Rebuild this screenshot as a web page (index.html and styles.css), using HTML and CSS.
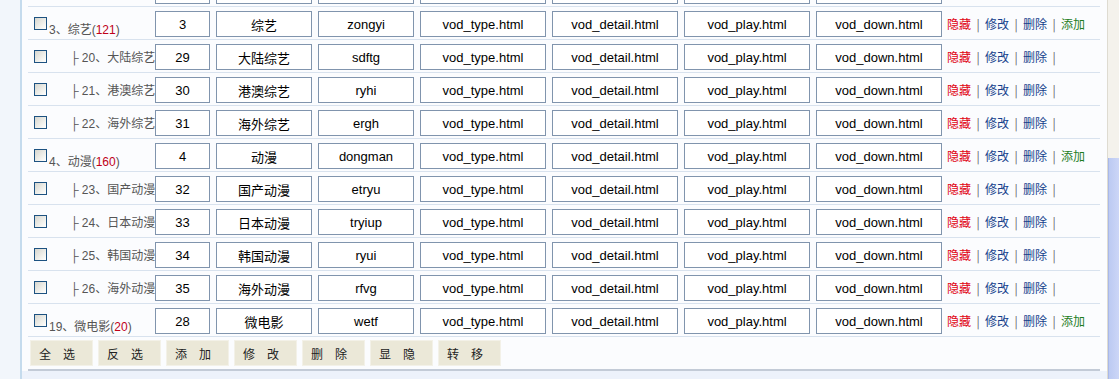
FILE: index.html
```html
<!DOCTYPE html>
<html lang="zh-CN">
<head>
    <meta charset="UTF-8">
    <title>栏目管理</title>
    <link rel="stylesheet" href="styles.css">
</head>
<body>
    <div class="page">
        <div class="side"></div>
        <div class="main">
            <form class="panel">
                <div class="row">
                    <div class="cell-name"><input type="checkbox"><span class="text child">├ 18、海外剧集</span></div>
                    <input class="field w-id" value="27"><input class="field w-name" value="海外剧集"><input class="field w-name" value="haiwai">
                    <input class="field w-file" value="vod_type.html"><input class="field w-file" value="vod_detail.html"><input class="field w-file" value="vod_play.html"><input class="field w-file" value="vod_down.html">
                    <div class="actions"><a class="hide">隐藏</a><span class="sep">|</span><a class="edit">修改</a><span class="sep">|</span><a class="edit">删除</a><span class="sep">|</span></div>
                </div>
                <div class="row">
                    <div class="cell-name"><input type="checkbox"><span class="text">3、综艺(<em>121</em>)</span></div>
                    <input class="field w-id" value="3"><input class="field w-name" value="综艺"><input class="field w-name" value="zongyi">
                    <input class="field w-file" value="vod_type.html"><input class="field w-file" value="vod_detail.html"><input class="field w-file" value="vod_play.html"><input class="field w-file" value="vod_down.html">
                    <div class="actions"><a class="hide">隐藏</a><span class="sep">|</span><a class="edit">修改</a><span class="sep">|</span><a class="edit">删除</a><span class="sep">|</span><a class="add">添加</a></div>
                </div>
                <div class="row">
                    <div class="cell-name"><input type="checkbox"><span class="text child">├ 20、大陆综艺</span></div>
                    <input class="field w-id" value="29"><input class="field w-name" value="大陆综艺"><input class="field w-name" value="sdftg">
                    <input class="field w-file" value="vod_type.html"><input class="field w-file" value="vod_detail.html"><input class="field w-file" value="vod_play.html"><input class="field w-file" value="vod_down.html">
                    <div class="actions"><a class="hide">隐藏</a><span class="sep">|</span><a class="edit">修改</a><span class="sep">|</span><a class="edit">删除</a><span class="sep">|</span></div>
                </div>
                <div class="row">
                    <div class="cell-name"><input type="checkbox"><span class="text child">├ 21、港澳综艺</span></div>
                    <input class="field w-id" value="30"><input class="field w-name" value="港澳综艺"><input class="field w-name" value="ryhi">
                    <input class="field w-file" value="vod_type.html"><input class="field w-file" value="vod_detail.html"><input class="field w-file" value="vod_play.html"><input class="field w-file" value="vod_down.html">
                    <div class="actions"><a class="hide">隐藏</a><span class="sep">|</span><a class="edit">修改</a><span class="sep">|</span><a class="edit">删除</a><span class="sep">|</span></div>
                </div>
                <div class="row">
                    <div class="cell-name"><input type="checkbox"><span class="text child">├ 22、海外综艺</span></div>
                    <input class="field w-id" value="31"><input class="field w-name" value="海外综艺"><input class="field w-name" value="ergh">
                    <input class="field w-file" value="vod_type.html"><input class="field w-file" value="vod_detail.html"><input class="field w-file" value="vod_play.html"><input class="field w-file" value="vod_down.html">
                    <div class="actions"><a class="hide">隐藏</a><span class="sep">|</span><a class="edit">修改</a><span class="sep">|</span><a class="edit">删除</a><span class="sep">|</span></div>
                </div>
                <div class="row">
                    <div class="cell-name"><input type="checkbox"><span class="text">4、动漫(<em>160</em>)</span></div>
                    <input class="field w-id" value="4"><input class="field w-name" value="动漫"><input class="field w-name" value="dongman">
                    <input class="field w-file" value="vod_type.html"><input class="field w-file" value="vod_detail.html"><input class="field w-file" value="vod_play.html"><input class="field w-file" value="vod_down.html">
                    <div class="actions"><a class="hide">隐藏</a><span class="sep">|</span><a class="edit">修改</a><span class="sep">|</span><a class="edit">删除</a><span class="sep">|</span><a class="add">添加</a></div>
                </div>
                <div class="row">
                    <div class="cell-name"><input type="checkbox"><span class="text child">├ 23、国产动漫</span></div>
                    <input class="field w-id" value="32"><input class="field w-name" value="国产动漫"><input class="field w-name" value="etryu">
                    <input class="field w-file" value="vod_type.html"><input class="field w-file" value="vod_detail.html"><input class="field w-file" value="vod_play.html"><input class="field w-file" value="vod_down.html">
                    <div class="actions"><a class="hide">隐藏</a><span class="sep">|</span><a class="edit">修改</a><span class="sep">|</span><a class="edit">删除</a><span class="sep">|</span></div>
                </div>
                <div class="row">
                    <div class="cell-name"><input type="checkbox"><span class="text child">├ 24、日本动漫</span></div>
                    <input class="field w-id" value="33"><input class="field w-name" value="日本动漫"><input class="field w-name" value="tryiup">
                    <input class="field w-file" value="vod_type.html"><input class="field w-file" value="vod_detail.html"><input class="field w-file" value="vod_play.html"><input class="field w-file" value="vod_down.html">
                    <div class="actions"><a class="hide">隐藏</a><span class="sep">|</span><a class="edit">修改</a><span class="sep">|</span><a class="edit">删除</a><span class="sep">|</span></div>
                </div>
                <div class="row">
                    <div class="cell-name"><input type="checkbox"><span class="text child">├ 25、韩国动漫</span></div>
                    <input class="field w-id" value="34"><input class="field w-name" value="韩国动漫"><input class="field w-name" value="ryui">
                    <input class="field w-file" value="vod_type.html"><input class="field w-file" value="vod_detail.html"><input class="field w-file" value="vod_play.html"><input class="field w-file" value="vod_down.html">
                    <div class="actions"><a class="hide">隐藏</a><span class="sep">|</span><a class="edit">修改</a><span class="sep">|</span><a class="edit">删除</a><span class="sep">|</span></div>
                </div>
                <div class="row">
                    <div class="cell-name"><input type="checkbox"><span class="text child">├ 26、海外动漫</span></div>
                    <input class="field w-id" value="35"><input class="field w-name" value="海外动漫"><input class="field w-name" value="rfvg">
                    <input class="field w-file" value="vod_type.html"><input class="field w-file" value="vod_detail.html"><input class="field w-file" value="vod_play.html"><input class="field w-file" value="vod_down.html">
                    <div class="actions"><a class="hide">隐藏</a><span class="sep">|</span><a class="edit">修改</a><span class="sep">|</span><a class="edit">删除</a><span class="sep">|</span></div>
                </div>
                <div class="row">
                    <div class="cell-name"><input type="checkbox"><span class="text">19、微电影(<em>20</em>)</span></div>
                    <input class="field w-id" value="28"><input class="field w-name" value="微电影"><input class="field w-name" value="wetf">
                    <input class="field w-file" value="vod_type.html"><input class="field w-file" value="vod_detail.html"><input class="field w-file" value="vod_play.html"><input class="field w-file" value="vod_down.html">
                    <div class="actions"><a class="hide">隐藏</a><span class="sep">|</span><a class="edit">修改</a><span class="sep">|</span><a class="edit">删除</a><span class="sep">|</span><a class="add">添加</a></div>
                </div>
                <div class="bar">
                    <button type="button">全选</button>
                    <button type="button">反选</button>
                    <button type="button">添加</button>
                    <button type="button">修改</button>
                    <button type="button">删除</button>
                    <button type="button">显隐</button>
                    <button type="button">转移</button>
                </div>
            </form>
        </div>
        <div class="scroll"><div class="thumb"></div></div>
    </div>
</body>
</html>
```
FILE: styles.css
```css
body {
    margin: 0;
    font-family: "Liberation Sans", "Noto Sans CJK SC", sans-serif;
    font-size: 12px;
    background-color: #edf2fb;
    overflow: hidden;
}

.page {
    display: flex;
    height: 379px;
    overflow: hidden;
}

.side {
    width: 20px;
    flex: none;
    background-color: #f2f6fb;
    border-right: 2px solid #c5dbed;
}

.main {
    flex: 1;
    background-color: #edf2fb;
    overflow: hidden;
}

.panel {
    margin: -26px 0 0 0;
    padding: 0 7px 0 6px;
    background-color: #fbfcfe;
}

.row {
    display: flex;
    height: 32px;
    border-bottom: 1px solid #d8e2ee;
}

.cell-name {
    width: 127px;
    flex: none;
    display: flex;
    white-space: nowrap;
    overflow: hidden;
    color: #555555;
}

.cell-name input[type=checkbox] {
    appearance: none;
    -webkit-appearance: none;
    flex: none;
    width: 13px;
    height: 13px;
    margin: 10px 2px 0 6px;
    border: 1px solid #1d5281;
    background: linear-gradient(135deg, #d6d6cf, #f4f4f0 70%, #ffffff);
}

.cell-name .text {
    padding-top: 16px;
    line-height: 14px;
}

.cell-name .child {
    padding-top: 11px;
    padding-left: 21px;
}

.cell-name em {
    font-style: normal;
    color: #c00018;
}

.field {
    flex: none;
    box-sizing: border-box;
    height: 26px;
    margin: 4px 6px 0 0;
    padding: 0;
    border: 1px solid #8094ad;
    background-color: #ffffff;
    font-family: "Liberation Sans", "Noto Sans CJK SC", sans-serif;
    font-size: 13px;
    color: #000000;
    text-align: center;
}

.w-id {
    width: 55px;
}

.w-name {
    width: 96px;
}

.w-file {
    width: 126px;
}

.actions {
    margin-left: -1px;
    line-height: 32px;
    padding-top: 1px;
    white-space: nowrap;
    font-family: "Noto Sans CJK SC", sans-serif;
}

.actions a {
    cursor: pointer;
}

.hide {
    color: #e00010;
}

.edit {
    color: #153f8c;
}

.add {
    color: #1f7d1f;
}

.sep {
    display: inline-block;
    width: 14px;
    text-align: center;
    color: #666666;
}

.bar {
    display: flex;
    gap: 5px;
    padding: 3px 0 3px 2px;
    border-bottom: 2px solid #c3cbd7;
}

.bar button {
    box-sizing: border-box;
    width: 63px;
    height: 26px;
    padding: 0 0 0 8px;
    border: 1px solid #f3f1e8;
    background-color: #ebe8d8;
    font-family: "Noto Sans CJK SC", sans-serif;
    font-size: 12px;
    letter-spacing: 12px;
    text-align: left;
    color: #222222;
}

.scroll {
    width: 11px;
    flex: none;
    display: flex;
    flex-direction: column;
    padding-top: 158px;
    border-left: 1px solid #dedbd1;
    background-color: #f4f2ec;
}

.thumb {
    flex: 1;
    border-left: 1px solid #a9b8e8;
    background: linear-gradient(90deg, #bccaf2, #ccd6f7);
}
```
